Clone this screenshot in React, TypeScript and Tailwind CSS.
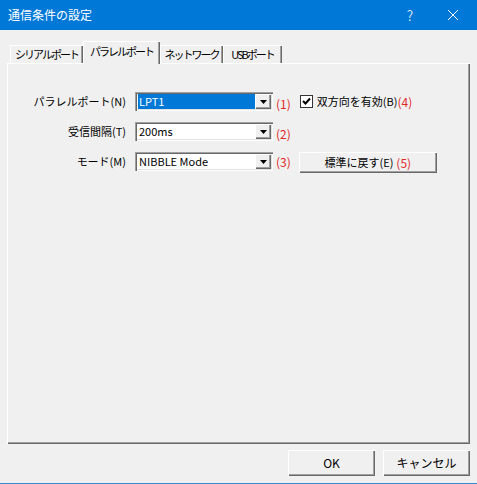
import React from 'react'

const font = { fontFamily: '"Noto Sans CJK JP", "Noto Sans", sans-serif' }

const raised =
  'bg-[#f0f0f0] shadow-[inset_1px_1px_0_#ffffff,inset_-1px_-1px_0_#696969,inset_-2px_-2px_0_#a0a0a0]'

function Combo({ value, selected }: { value: string; selected?: boolean }) {
  return (
    <div className="flex h-[19px] w-[138px] items-stretch bg-white p-[2px] shadow-[inset_1px_1px_0_#a0a0a0,inset_2px_2px_0_#696969,inset_-1px_-1px_0_#ffffff,inset_-2px_-2px_0_#e3e3e3]">
      <div className="flex flex-1 items-center pl-[1px]">
        <span
          className={`flex h-full flex-1 items-center pl-[1px] text-[11px] leading-none ${
            selected ? 'bg-[#0078d7] text-white' : 'text-black'
          }`}
        >
          {value}
        </span>
      </div>
      <div className={`flex w-[16px] items-center justify-center ${raised}`}>
        <svg width="7" height="4" viewBox="0 0 7 4">
          <polygon points="0,0 7,0 3.5,4" fill="#000" />
        </svg>
      </div>
    </div>
  )
}

function Mark({ n }: { n: number }) {
  return <span className="text-[12px] leading-none text-[#e02828]">({n})</span>
}

function Tab({ label, active, width }: { label: string; active?: boolean; width: string }) {
  if (active) {
    return (
      <div className={`relative z-10 -mb-[1px] flex h-[23px] ${width} items-center justify-center whitespace-nowrap bg-[#f0f0f0] pb-[2px] text-[11px] tracking-[-2px] shadow-[inset_1px_1px_0_#ffffff,inset_-1px_0_0_#696969,inset_-2px_0_0_#a0a0a0]`}>
        {label}
      </div>
    )
  }
  return (
    <div className={`flex h-[18px] ${width} items-center justify-center whitespace-nowrap bg-[#f0f0f0] text-[11px] tracking-[-2px] shadow-[inset_1px_1px_0_#ffffff,inset_-1px_0_0_#696969,inset_-2px_0_0_#a0a0a0]`}>
      {label}
    </div>
  )
}

export default function App() {
  return (
    <div className="flex h-[484px] w-[477px] flex-col bg-[#f0f0f0] text-black" style={font}>
      {/* Title bar */}
      <div className="flex h-[30px] shrink-0 items-center bg-[#0078d7] text-white">
        <span className="ml-[8px] flex-1 text-[12px]">通信条件の設定</span>
        <span className="mr-[35px] text-[14px] font-light">?</span>
        <svg className="mr-[19px]" width="10" height="10" viewBox="0 0 10 10">
          <path d="M0 0 L10 10 M10 0 L0 10" stroke="#fff" strokeWidth="1" />
        </svg>
      </div>

      {/* Tabs */}
      <div className="ml-[10px] mt-[11px] flex items-end">
        <Tab label="シリアルポート" width="w-[73px]" />
        <Tab label="パラレルポート" width="w-[77px]" active />
        <Tab label="ネットワーク" width="w-[63px]" />
        <Tab label="USBポート" width="w-[59px]" />
      </div>

      {/* Panel */}
      <div className="mx-[7px] h-[381px] shrink-0 shadow-[inset_1px_1px_0_#ffffff,inset_-1px_-1px_0_#696969,inset_-2px_-2px_0_#a0a0a0]">
        <div className="mt-[29px] flex flex-col gap-[11px]">
          <div className="flex h-[19px] items-center">
            <span className="w-[119px] text-right text-[11px] leading-none">パラレルポート(N)</span>
            <div className="ml-[9px]">
              <Combo value="LPT1" selected />
            </div>
            <span className="ml-[3px]">
              <Mark n={1} />
            </span>
            <div className="ml-[9px] flex items-center">
              <div className="flex h-[13px] w-[13px] items-center justify-center border border-[#333] bg-white">
                <svg width="9" height="9" viewBox="0 0 9 9">
                  <path d="M1 4 L3.5 6.5 L8 1.5" stroke="#000" strokeWidth="2" fill="none" />
                </svg>
              </div>
              <span className="ml-[4px] text-[11px] leading-none">双方向を有効(B)</span>
              <Mark n={4} />
            </div>
          </div>

          <div className="flex h-[19px] items-center">
            <span className="w-[119px] text-right text-[11px] leading-none">受信間隔(T)</span>
            <div className="ml-[9px]">
              <Combo value="200ms" />
            </div>
            <span className="ml-[3px]">
              <Mark n={2} />
            </span>
          </div>

          <div className="flex h-[19px] items-start">
            <span className="flex h-[19px] w-[119px] items-center justify-end text-[11px] leading-none">モード(M)</span>
            <div className="ml-[9px]">
              <Combo value="NIBBLE Mode" />
            </div>
            <span className="ml-[3px] flex h-[19px] items-center">
              <Mark n={3} />
            </span>
            <button className={`ml-[8px] flex h-[21px] w-[138px] shrink-0 items-center justify-center gap-[3px] text-[11px] leading-none ${raised}`}>
              <span>標準に戻す(E)</span>
              <Mark n={5} />
            </button>
          </div>
        </div>
      </div>

      {/* Footer buttons */}
      <div className="mr-[7px] mt-[6px] flex justify-end gap-[8px]">
        <button className={`h-[26px] w-[87px] text-[12px] ${raised}`}>OK</button>
        <button className={`h-[26px] w-[87px] text-[12px] ${raised}`}>キャンセル</button>
      </div>
      <div className="mt-auto h-[1px] bg-[#3c8ad0]" />
    </div>
  )
}
